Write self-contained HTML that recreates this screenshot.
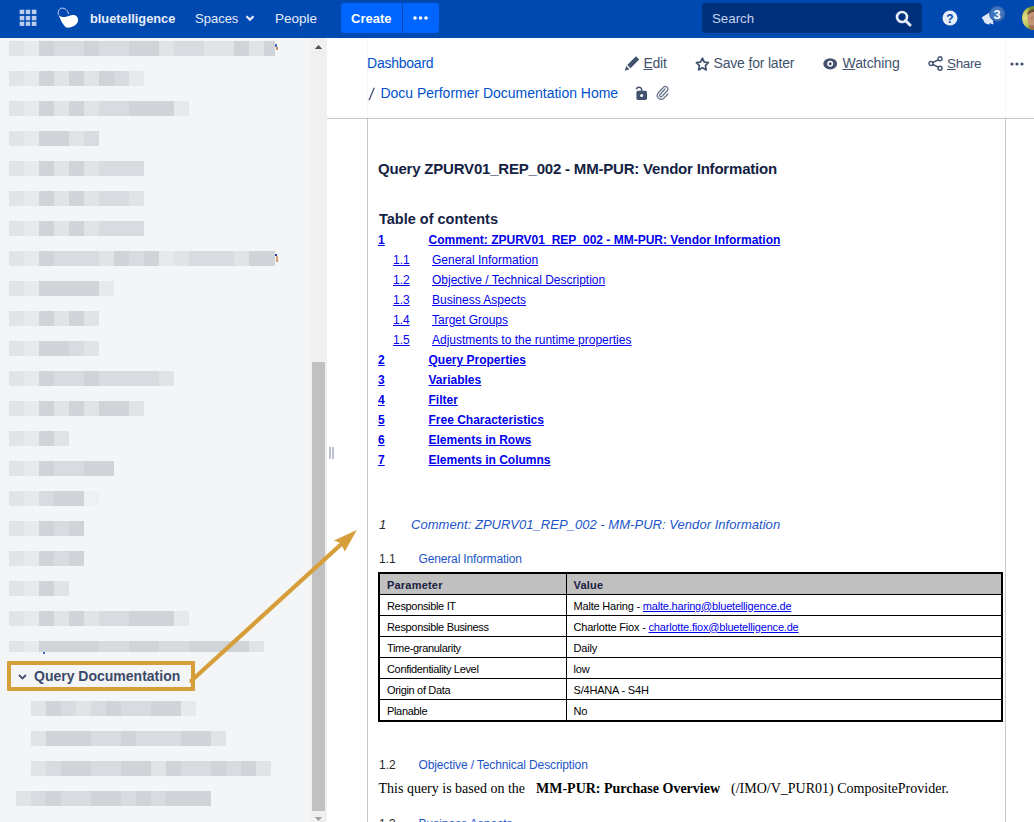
<!DOCTYPE html>
<html><head><meta charset="utf-8">
<style>
*{margin:0;padding:0;box-sizing:border-box}
html,body{width:1034px;height:822px;overflow:hidden;background:#fff;font-family:"Liberation Sans",sans-serif}
.a{position:absolute;white-space:nowrap}
svg{display:block}
#hdr{position:absolute;left:0;top:0;width:1034px;height:38px;background:#0049b0}
#side{position:absolute;left:0;top:38px;width:327px;height:784px;background:#f4f5f7}
.row{position:absolute;height:15px;display:flex}
.row i{display:block;width:15px;height:100%;flex:none}
u{text-decoration:underline}
table.pt{position:absolute;left:378px;top:572px;width:625px;border-collapse:collapse;border:2px solid #000;font-size:11px;letter-spacing:-0.33px;color:#000}
table.pt td{border:1px solid #000;height:21px;padding:5px 0 0 7px;white-space:nowrap;line-height:12px;vertical-align:top}
table.pt td+td{letter-spacing:-0.19px}
table.pt tr.th td{background:#c0c0c0;font-weight:bold;color:#1a2040;letter-spacing:0.2px}
</style></head><body>
<div id="hdr">
  <svg class="a" style="left:19px;top:9px" width="19" height="18" viewBox="0 0 19 18"><g fill="#bccdee">
    <rect x="0.7" y="0.7" width="4.6" height="4.4"/><rect x="6.8" y="0.7" width="4.4" height="4.4"/><rect x="12.8" y="0.7" width="4.6" height="4.4"/>
    <rect x="0.7" y="6.9" width="4.6" height="4.4"/><rect x="6.8" y="6.9" width="4.4" height="4.4"/><rect x="12.8" y="6.9" width="4.6" height="4.4"/>
    <rect x="0.7" y="12.7" width="4.6" height="4.2"/><rect x="6.8" y="12.7" width="4.4" height="4.2"/><rect x="12.8" y="12.7" width="4.6" height="4.2"/>
    </g></svg>
  <svg class="a" style="left:56px;top:6px" width="24" height="24" viewBox="0 0 24 24">
    <path d="M2.6 8.8 C1.6 6.5 2.6 2.3 5.8 2.1 C9 2 12 4.5 12.6 8.2" fill="none" stroke="#fff" stroke-width="0.9" opacity="0.85"/>
    <path d="M2.6 9 C4.5 10.8 6.5 11.2 9 10.9 C11.5 10.6 14 9.2 17 9 C20 8.8 22.2 11 22.1 14.3 C22 18 17 21.8 11.8 21.8 C8 21.5 4.8 14.5 2.6 9 Z" fill="#fff"/>
  </svg>
  <div class="a" style="left:90px;top:11px;font-size:12.8px;font-weight:bold;color:#e6ecf8">bluetelligence</div>
  <div class="a" style="left:195px;top:10.8px;font-size:13px;color:#e6ecf8">Spaces</div>
  <svg class="a" style="left:245px;top:14px" width="10" height="8" viewBox="0 0 10 8"><path d="M1.5 2.2 L5 5.7 L8.5 2.2" stroke="#e6ecf8" stroke-width="2.3" fill="none"/></svg>
  <div class="a" style="left:275px;top:10.8px;font-size:13.5px;color:#e6ecf8">People</div>
  <div class="a" style="left:341px;top:3px;width:98px;height:30px;background:#0065ff;border-radius:3px"></div>
  <div class="a" style="left:402px;top:3px;width:1px;height:30px;background:#0049b0"></div>
  <div class="a" style="left:351px;top:10.6px;font-size:13px;font-weight:bold;color:#fff">Create</div>
  <svg class="a" style="left:413px;top:16px" width="15" height="4"><circle cx="2" cy="2" r="1.8" fill="#fff"/><circle cx="7.5" cy="2" r="1.8" fill="#fff"/><circle cx="13" cy="2" r="1.8" fill="#fff"/></svg>
  <div class="a" style="left:702px;top:3px;width:220px;height:30px;background:#00307c;border-radius:3px"></div>
  <div class="a" style="left:712px;top:10.5px;font-size:13.3px;color:#c5d3ee">Search</div>
  <svg class="a" style="left:895px;top:10px" width="17" height="17" viewBox="0 0 17 17"><circle cx="7" cy="7" r="5" stroke="#e6ecf8" stroke-width="2.6" fill="none"/><path d="M10.5 10.5 L15 15" stroke="#e6ecf8" stroke-width="3" stroke-linecap="round"/></svg>
  <svg class="a" style="left:942px;top:10px" width="16" height="16" viewBox="0 0 16 16"><circle cx="8" cy="8" r="7.5" fill="#e6ecf8"/><text x="8" y="12.5" text-anchor="middle" font-family="Liberation Sans" font-weight="bold" font-size="12" fill="#0049b0">?</text></svg>
  <svg class="a" style="left:980px;top:10px" width="16" height="17" viewBox="0 0 16 17"><path d="M2.2 7.6 L11 2 L13 14 L3.2 9.6 Z" fill="#dfe8f8" stroke="#dfe8f8" stroke-width="1" stroke-linejoin="round"/><path d="M4.3 10.3 L5.4 12.6 L8.8 13.9 L9.4 12 Z" fill="#dfe8f8" stroke="#dfe8f8" stroke-width="1.4" stroke-linejoin="round"/></svg>
  <svg class="a" style="left:989px;top:6px" width="17" height="17" viewBox="0 0 17 17"><circle cx="8.2" cy="7.8" r="7.6" fill="#3d74bb" stroke="#2a5ea5" stroke-width="1"/><text x="8.2" y="13" text-anchor="middle" font-family="Liberation Sans" font-weight="bold" font-size="13" fill="#fff">3</text></svg>
  <svg class="a" style="left:1021px;top:6px" width="13" height="24" viewBox="0 0 13 24"><defs><clipPath id="av"><circle cx="13" cy="12" r="12"/></clipPath><radialGradient id="ag" cx="0.3" cy="0.5" r="0.6"><stop offset="0" stop-color="#e8e088"/><stop offset="0.6" stop-color="#b8c058"/><stop offset="1" stop-color="#6d8a30"/></radialGradient></defs><g clip-path="url(#av)"><rect x="0" y="0" width="13" height="24" fill="url(#ag)"/><ellipse cx="13.5" cy="13" rx="6.8" ry="9" fill="#c59478"/><path d="M6.5 8 C7 4.5 10 3.2 14 3.5 L14 6 C11 5.6 8.5 6.3 7.2 9 Z" fill="#6b4a35"/><ellipse cx="11" cy="12" rx="1" ry="0.6" fill="#7a5a48"/><path d="M9 19 L14 19.5 L14 25 L8 25 Z" fill="#a07050"/></g></svg>
</div>

<div id="side"></div>
<div class="row" style="left:9px;top:41px;height:15px"><i style="background:#e3e4e8"></i><i style="background:#e8e9eb"></i><i style="background:#d0d3d8"></i><i style="background:#d8dbdf"></i><i style="background:#d8dbdf"></i><i style="background:#d0d3d8"></i><i style="background:#d8dbdf"></i><i style="background:#d8dbdf"></i><i style="background:#d0d3d8"></i><i style="background:#d0d3d8"></i><i style="background:#e2e3e7"></i><i style="background:#d8dbdf"></i><i style="background:#d8dbdf"></i><i style="background:#e2e3e7"></i><i style="background:#e2e3e7"></i><i style="background:#d0d3d8"></i><i style="background:#e2e3e7"></i><i style="background:#d0d3d8;width:11px"></i></div>
<div class="row" style="left:9px;top:71px;height:15px"><i style="background:#e3e4e8"></i><i style="background:#e8e9eb"></i><i style="background:#d0d3d8"></i><i style="background:#e2e3e7"></i><i style="background:#d0d3d8"></i><i style="background:#e2e3e7"></i><i style="background:#d0d3d8"></i><i style="background:#d8dbdf"></i><i style="background:#e7e9ec"></i></div>
<div class="row" style="left:9px;top:101px;height:15px"><i style="background:#e3e4e8"></i><i style="background:#e8e9eb"></i><i style="background:#d0d3d8"></i><i style="background:#e2e3e7"></i><i style="background:#d0d3d8"></i><i style="background:#e2e3e7"></i><i style="background:#d8dbdf"></i><i style="background:#d8dbdf"></i><i style="background:#d0d3d8"></i><i style="background:#d0d3d8"></i><i style="background:#d0d3d8"></i><i style="background:#e7e9ec"></i></div>
<div class="row" style="left:9px;top:131px;height:15px"><i style="background:#e3e4e8"></i><i style="background:#e8e9eb"></i><i style="background:#d0d3d8"></i><i style="background:#d0d3d8"></i><i style="background:#e2e3e7"></i><i style="background:#d8dbdf"></i></div>
<div class="row" style="left:9px;top:161px;height:15px"><i style="background:#e3e4e8"></i><i style="background:#e8e9eb"></i><i style="background:#d0d3d8"></i><i style="background:#e2e3e7"></i><i style="background:#d0d3d8"></i><i style="background:#e2e3e7"></i><i style="background:#d8dbdf"></i><i style="background:#d8dbdf"></i><i style="background:#d8dbdf"></i></div>
<div class="row" style="left:9px;top:191px;height:15px"><i style="background:#e3e4e8"></i><i style="background:#e8e9eb"></i><i style="background:#d0d3d8"></i><i style="background:#e2e3e7"></i><i style="background:#d0d3d8"></i><i style="background:#e2e3e7"></i><i style="background:#d8dbdf"></i><i style="background:#d8dbdf"></i><i style="background:#e2e3e7"></i></div>
<div class="row" style="left:9px;top:221px;height:15px"><i style="background:#e3e4e8"></i><i style="background:#e8e9eb"></i><i style="background:#d0d3d8"></i><i style="background:#e2e3e7"></i><i style="background:#d0d3d8"></i><i style="background:#e2e3e7"></i><i style="background:#d8dbdf"></i><i style="background:#d8dbdf"></i><i style="background:#d8dbdf"></i></div>
<div class="row" style="left:9px;top:251px;height:15px"><i style="background:#e3e4e8"></i><i style="background:#e8e9eb"></i><i style="background:#d0d3d8"></i><i style="background:#d8dbdf"></i><i style="background:#d8dbdf"></i><i style="background:#d8dbdf"></i><i style="background:#e2e3e7"></i><i style="background:#d0d3d8"></i><i style="background:#d8dbdf"></i><i style="background:#d0d3d8"></i><i style="background:#e7e9ec"></i><i style="background:#e2e3e7"></i><i style="background:#d8dbdf"></i><i style="background:#d8dbdf"></i><i style="background:#d8dbdf"></i><i style="background:#e2e3e7"></i><i style="background:#d0d3d8"></i><i style="background:#d0d3d8;width:11px"></i></div>
<div class="row" style="left:9px;top:281px;height:15px"><i style="background:#e3e4e8"></i><i style="background:#e8e9eb"></i><i style="background:#d0d3d8"></i><i style="background:#d0d3d8"></i><i style="background:#d0d3d8"></i><i style="background:#d0d3d8"></i><i style="background:#e7e9ec"></i></div>
<div class="row" style="left:9px;top:311px;height:15px"><i style="background:#e3e4e8"></i><i style="background:#e8e9eb"></i><i style="background:#d0d3d8"></i><i style="background:#e2e3e7"></i><i style="background:#d0d3d8"></i><i style="background:#e2e3e7"></i></div>
<div class="row" style="left:9px;top:341px;height:15px"><i style="background:#e3e4e8"></i><i style="background:#e8e9eb"></i><i style="background:#d0d3d8"></i><i style="background:#d0d3d8"></i><i style="background:#d8dbdf"></i><i style="background:#e2e3e7"></i></div>
<div class="row" style="left:9px;top:371px;height:15px"><i style="background:#e3e4e8"></i><i style="background:#e8e9eb"></i><i style="background:#d0d3d8"></i><i style="background:#d8dbdf"></i><i style="background:#d8dbdf"></i><i style="background:#d0d3d8"></i><i style="background:#d8dbdf"></i><i style="background:#d8dbdf"></i><i style="background:#d8dbdf"></i><i style="background:#d8dbdf"></i><i style="background:#e2e3e7"></i></div>
<div class="row" style="left:9px;top:401px;height:15px"><i style="background:#e3e4e8"></i><i style="background:#e8e9eb"></i><i style="background:#d0d3d8"></i><i style="background:#e2e3e7"></i><i style="background:#d0d3d8"></i><i style="background:#e2e3e7"></i><i style="background:#d0d3d8"></i><i style="background:#d0d3d8"></i><i style="background:#e2e3e7"></i></div>
<div class="row" style="left:9px;top:431px;height:15px"><i style="background:#e3e4e8"></i><i style="background:#e8e9eb"></i><i style="background:#d0d3d8"></i><i style="background:#e2e3e7"></i></div>
<div class="row" style="left:9px;top:461px;height:15px"><i style="background:#e3e4e8"></i><i style="background:#e8e9eb"></i><i style="background:#d0d3d8"></i><i style="background:#d8dbdf"></i><i style="background:#d8dbdf"></i><i style="background:#d0d3d8"></i><i style="background:#d0d3d8"></i></div>
<div class="row" style="left:9px;top:491px;height:15px"><i style="background:#e3e4e8"></i><i style="background:#e8e9eb"></i><i style="background:#d8dbdf"></i><i style="background:#d0d3d8"></i><i style="background:#d0d3d8"></i><i style="background:#eef0f2"></i></div>
<div class="row" style="left:9px;top:521px;height:15px"><i style="background:#e3e4e8"></i><i style="background:#e8e9eb"></i><i style="background:#d0d3d8"></i><i style="background:#d8dbdf"></i><i style="background:#d0d3d8"></i></div>
<div class="row" style="left:9px;top:551px;height:15px"><i style="background:#e3e4e8"></i><i style="background:#e8e9eb"></i><i style="background:#d0d3d8"></i><i style="background:#d8dbdf"></i><i style="background:#d0d3d8"></i></div>
<div class="row" style="left:9px;top:581px;height:15px"><i style="background:#e3e4e8"></i><i style="background:#e8e9eb"></i><i style="background:#d0d3d8"></i><i style="background:#e2e3e7"></i></div>
<div class="row" style="left:9px;top:611px;height:15px"><i style="background:#e3e4e8"></i><i style="background:#e8e9eb"></i><i style="background:#d0d3d8"></i><i style="background:#e2e3e7"></i><i style="background:#d0d3d8"></i><i style="background:#e2e3e7"></i><i style="background:#d8dbdf"></i><i style="background:#d8dbdf"></i><i style="background:#d0d3d8"></i><i style="background:#d0d3d8"></i><i style="background:#d0d3d8"></i><i style="background:#e7e9ec"></i></div>
<div class="row" style="left:9px;top:641px;height:11px"><i style="background:#e3e4e8"></i><i style="background:#e8e9eb"></i><i style="background:#d0d3d8"></i><i style="background:#d0d3d8"></i><i style="background:#d0d3d8"></i><i style="background:#d0d3d8"></i><i style="background:#d8dbdf"></i><i style="background:#d8dbdf"></i><i style="background:#d0d3d8"></i><i style="background:#d0d3d8"></i><i style="background:#d8dbdf"></i><i style="background:#d8dbdf"></i><i style="background:#d0d3d8"></i><i style="background:#d0d3d8"></i><i style="background:#d0d3d8"></i><i style="background:#d0d3d8"></i><i style="background:#e2e3e7"></i></div>
<div class="row" style="left:31px;top:701px;height:15px"><i style="background:#e2e3e7"></i><i style="background:#d0d3d8"></i><i style="background:#d8dbdf"></i><i style="background:#e2e3e7"></i><i style="background:#d8dbdf"></i><i style="background:#d0d3d8"></i><i style="background:#d8dbdf"></i><i style="background:#d8dbdf"></i><i style="background:#d0d3d8"></i><i style="background:#d0d3d8"></i><i style="background:#e7e9ec"></i></div>
<div class="row" style="left:31px;top:731px;height:15px"><i style="background:#e2e3e7"></i><i style="background:#d0d3d8"></i><i style="background:#d0d3d8"></i><i style="background:#d0d3d8"></i><i style="background:#d8dbdf"></i><i style="background:#d8dbdf"></i><i style="background:#d0d3d8"></i><i style="background:#d8dbdf"></i><i style="background:#d8dbdf"></i><i style="background:#d8dbdf"></i><i style="background:#d0d3d8"></i><i style="background:#d0d3d8"></i><i style="background:#e2e3e7"></i></div>
<div class="row" style="left:31px;top:761px;height:15px"><i style="background:#e2e3e7"></i><i style="background:#d8dbdf"></i><i style="background:#d0d3d8"></i><i style="background:#d0d3d8"></i><i style="background:#d8dbdf"></i><i style="background:#d8dbdf"></i><i style="background:#d0d3d8"></i><i style="background:#d0d3d8"></i><i style="background:#e2e3e7"></i><i style="background:#d0d3d8"></i><i style="background:#d8dbdf"></i><i style="background:#d8dbdf"></i><i style="background:#d0d3d8"></i><i style="background:#d8dbdf"></i><i style="background:#d0d3d8"></i><i style="background:#e2e3e7"></i></div>
<div class="row" style="left:16px;top:791px;height:15px"><i style="background:#e2e3e7"></i><i style="background:#d8dbdf"></i><i style="background:#d0d3d8"></i><i style="background:#d8dbdf"></i><i style="background:#d8dbdf"></i><i style="background:#d0d3d8"></i><i style="background:#d0d3d8"></i><i style="background:#d8dbdf"></i><i style="background:#d0d3d8"></i><i style="background:#d8dbdf"></i><i style="background:#d0d3d8"></i><i style="background:#d0d3d8"></i><i style="background:#d0d3d8"></i></div>
<div class="a" style="left:275px;top:44px;width:2px;height:3px;background:#4a6fc0"></div>
<div class="a" style="left:276px;top:47px;width:1.5px;height:3px;background:#c89060"></div>
<div class="a" style="left:275px;top:254px;width:2px;height:2px;background:#2a3a90"></div>
<div class="a" style="left:276px;top:256px;width:1.5px;height:6px;background:#d8a070"></div>
<div class="a" style="left:43px;top:652px;width:1.5px;height:2px;background:#3a70c0"></div>
<!-- Query Documentation highlight -->
<svg class="a" style="left:18px;top:674px" width="9" height="6" viewBox="0 0 9 6"><path d="M1 1 L4.5 4.5 L8 1" stroke="#42526e" stroke-width="1.8" fill="none"/></svg>
<div class="a" style="left:34px;top:669px;font-size:14px;line-height:14px;font-weight:bold;color:#3a4a68">Query Documentation</div>
<div class="a" style="left:7px;top:661px;width:188px;height:30px;border:4px solid #d69e3a"></div>

<!-- scrollbar -->
<div class="a" style="left:310px;top:38px;width:17px;height:784px;background:#f0f0f0"></div>
<div class="a" style="left:312px;top:362px;width:13px;height:449px;background:#c1c1c1"></div>
<svg class="a" style="left:314px;top:44px" width="9" height="6"><path d="M0.8 5 L4.5 1 L8.2 5 Z" fill="#505050"/></svg>
<svg class="a" style="left:314px;top:816px" width="9" height="6"><path d="M0.8 1 L4.5 5 L8.2 1 Z" fill="#a0a0a0"/></svg>
<!-- splitter -->
<div class="a" style="left:329px;top:447px;width:2px;height:12px;background:#bcc3ce"></div>
<div class="a" style="left:332px;top:447px;width:2px;height:12px;background:#bcc3ce"></div>

<!-- page chrome lines -->
<div class="a" style="left:327px;top:118px;width:707px;height:1px;background:#c8c8c8"></div>
<div class="a" style="left:367px;top:38px;width:1px;height:80px;background:#f8f8f8"></div>
<div class="a" style="left:1005px;top:38px;width:1px;height:80px;background:#f8f8f8"></div>
<div class="a" style="left:367px;top:118px;width:1px;height:704px;background:#c8c8c8"></div>
<div class="a" style="left:1005px;top:118px;width:1px;height:704px;background:#c8c8c8"></div>

<div class="a" style="left:367px;top:55.95px;font-size:14px;line-height:14px;color:#0052cc;letter-spacing:-0.23px">Dashboard</div>
<svg class="a" style="left:367px;top:86px" width="9" height="16"><path d="M7.3 1.8 L2 14.2" stroke="#42526e" stroke-width="1.3"/></svg>
<div class="a" style="left:380.5px;top:85.95px;font-size:14px;line-height:14px;color:#0052cc;letter-spacing:-0.015px">Docu Performer Documentation Home</div>
<div class="a" style="left:643.5px;top:56.15px;font-size:14px;line-height:14px;color:#42526e;letter-spacing:-0.28px"><u>E</u>dit</div>
<div class="a" style="left:713.5px;top:56.15px;font-size:14px;line-height:14px;color:#42526e;letter-spacing:-0.18px">Save <u>f</u>or later</div>
<div class="a" style="left:842.5px;top:56.15px;font-size:14px;line-height:14px;color:#42526e;letter-spacing:-0.08px"><u>W</u>atching</div>
<div class="a" style="left:947px;top:56.57px;font-size:13.5px;line-height:13.5px;color:#42526e;letter-spacing:-0.35px"><u>S</u>hare</div>
<!-- toolbar icons -->
<svg class="a" style="left:624px;top:56px" width="16" height="16" viewBox="0 0 16 16"><path d="M4.9 10.6 L13.6 1.9" stroke="#42526e" stroke-width="4.6" stroke-linecap="butt"/><path d="M0.8 14.7 L2.2 9.9 L5.5 13.3 Z" fill="#42526e"/></svg>
<svg class="a" style="left:695px;top:57px" width="15" height="15" viewBox="0 0 15 15"><path d="M7.4 1.2 L9.3 5.2 L13.4 5.7 L10.4 8.6 L11.2 12.9 L7.4 10.8 L3.6 12.9 L4.4 8.6 L1.4 5.7 L5.5 5.2 Z" fill="none" stroke="#42526e" stroke-width="1.7" stroke-linejoin="round"/></svg>
<svg class="a" style="left:823px;top:57px" width="15" height="14" viewBox="0 0 15 14"><ellipse cx="7.2" cy="6.8" rx="6.9" ry="5.6" fill="#42526e"/><circle cx="7.2" cy="6.8" r="3" fill="#fff"/><circle cx="7.2" cy="6.8" r="1.5" fill="#42526e"/></svg>
<svg class="a" style="left:928px;top:56px" width="15" height="15" viewBox="0 0 15 15"><circle cx="12" cy="2.8" r="2" fill="none" stroke="#42526e" stroke-width="1.4"/><circle cx="3" cy="7.5" r="2" fill="none" stroke="#42526e" stroke-width="1.4"/><circle cx="12" cy="12.2" r="2" fill="none" stroke="#42526e" stroke-width="1.4"/><path d="M4.8 6.5 L10.2 3.8 M4.8 8.5 L10.2 11.2" stroke="#42526e" stroke-width="1.4"/></svg>
<svg class="a" style="left:1010px;top:62px" width="14" height="4"><circle cx="2" cy="2" r="1.6" fill="#42526e"/><circle cx="7" cy="2" r="1.6" fill="#42526e"/><circle cx="12" cy="2" r="1.6" fill="#42526e"/></svg>
<svg class="a" style="left:634px;top:85px" width="14" height="16" viewBox="0 0 14 16"><path d="M2.2 4.3 A2.9 2.9 0 0 1 7.6 3.8 V6.5" fill="none" stroke="#42526e" stroke-width="1.5"/><rect x="2.4" y="5.8" width="10.6" height="9.1" rx="1.6" fill="#42526e"/><circle cx="7.7" cy="10.4" r="1.5" fill="#fff"/></svg>
<svg class="a" style="left:656px;top:85px" width="14" height="15" viewBox="0 0 14 15"><path d="M9 4 L4 9.5 A1.3 1.3 0 0 0 6 11.3 L11.5 5.5 A2.6 2.6 0 0 0 7.8 2 L2.3 7.8 A3.9 3.9 0 0 0 7.8 13.3 L12 9" fill="none" stroke="#6b778c" stroke-width="1.3" stroke-linecap="round"/></svg>

<div class="a" style="left:378px;top:161.30px;font-size:15px;line-height:15px;font-weight:bold;color:#142244;letter-spacing:-0.2px">Query ZPURV01_REP_002 - MM-PUR: Vendor Information</div>
<div class="a" style="left:379px;top:211.73px;font-size:14.5px;line-height:14.5px;font-weight:bold;color:#142244">Table of contents</div>
<div class="a" style="left:378px;top:233.84px;font-size:12px;line-height:12px;font-weight:bold;color:#0000ee;text-decoration:underline">1</div>
<div class="a" style="left:428.5px;top:233.84px;font-size:12px;line-height:12px;font-weight:bold;color:#0000ee;text-decoration:underline">Comment: ZPURV01_REP_002 - MM-PUR: Vendor Information</div>
<div class="a" style="left:393px;top:253.84px;font-size:12px;line-height:12px;color:#0000ee;text-decoration:underline">1.1</div>
<div class="a" style="left:432px;top:253.84px;font-size:12px;line-height:12px;color:#0000ee;text-decoration:underline">General Information</div>
<div class="a" style="left:393px;top:273.84px;font-size:12px;line-height:12px;color:#0000ee;text-decoration:underline">1.2</div>
<div class="a" style="left:432px;top:273.84px;font-size:12px;line-height:12px;color:#0000ee;text-decoration:underline">Objective / Technical Description</div>
<div class="a" style="left:393px;top:293.84px;font-size:12px;line-height:12px;color:#0000ee;text-decoration:underline">1.3</div>
<div class="a" style="left:432px;top:293.84px;font-size:12px;line-height:12px;color:#0000ee;text-decoration:underline">Business Aspects</div>
<div class="a" style="left:393px;top:313.84px;font-size:12px;line-height:12px;color:#0000ee;text-decoration:underline">1.4</div>
<div class="a" style="left:432px;top:313.84px;font-size:12px;line-height:12px;color:#0000ee;text-decoration:underline">Target Groups</div>
<div class="a" style="left:393px;top:333.84px;font-size:12px;line-height:12px;color:#0000ee;text-decoration:underline">1.5</div>
<div class="a" style="left:432px;top:333.84px;font-size:12px;line-height:12px;color:#0000ee;text-decoration:underline">Adjustments to the runtime properties</div>
<div class="a" style="left:378px;top:353.84px;font-size:12px;line-height:12px;font-weight:bold;color:#0000ee;text-decoration:underline">2</div>
<div class="a" style="left:428.5px;top:353.84px;font-size:12px;line-height:12px;font-weight:bold;color:#0000ee;text-decoration:underline">Query Properties</div>
<div class="a" style="left:378px;top:373.84px;font-size:12px;line-height:12px;font-weight:bold;color:#0000ee;text-decoration:underline">3</div>
<div class="a" style="left:428.5px;top:373.84px;font-size:12px;line-height:12px;font-weight:bold;color:#0000ee;text-decoration:underline">Variables</div>
<div class="a" style="left:378px;top:393.84px;font-size:12px;line-height:12px;font-weight:bold;color:#0000ee;text-decoration:underline">4</div>
<div class="a" style="left:428.5px;top:393.84px;font-size:12px;line-height:12px;font-weight:bold;color:#0000ee;text-decoration:underline">Filter</div>
<div class="a" style="left:378px;top:413.84px;font-size:12px;line-height:12px;font-weight:bold;color:#0000ee;text-decoration:underline">5</div>
<div class="a" style="left:428.5px;top:413.84px;font-size:12px;line-height:12px;font-weight:bold;color:#0000ee;text-decoration:underline">Free Characteristics</div>
<div class="a" style="left:378px;top:433.84px;font-size:12px;line-height:12px;font-weight:bold;color:#0000ee;text-decoration:underline">6</div>
<div class="a" style="left:428.5px;top:433.84px;font-size:12px;line-height:12px;font-weight:bold;color:#0000ee;text-decoration:underline">Elements in Rows</div>
<div class="a" style="left:378px;top:453.84px;font-size:12px;line-height:12px;font-weight:bold;color:#0000ee;text-decoration:underline">7</div>
<div class="a" style="left:428.5px;top:453.84px;font-size:12px;line-height:12px;font-weight:bold;color:#0000ee;text-decoration:underline">Elements in Columns</div>
<div class="a" style="left:379px;top:518.00px;font-size:13px;line-height:13px;font-style:italic;color:#2a2a2a">1</div>
<div class="a" style="left:411px;top:518.00px;font-size:13px;line-height:13px;font-style:italic;color:#1c55c8;letter-spacing:0.04px">Comment: ZPURV01_REP_002 - MM-PUR: Vendor Information</div>
<div class="a" style="left:379px;top:552.84px;font-size:12px;line-height:12px;color:#2a2a2a">1.1</div>
<div class="a" style="left:418.5px;top:552.84px;font-size:12px;line-height:12px;color:#1c55c8;letter-spacing:-0.15px">General Information</div>
<div class="a" style="left:379px;top:758.84px;font-size:12px;line-height:12px;color:#2a2a2a">1.2</div>
<div class="a" style="left:418.5px;top:758.84px;font-size:12px;line-height:12px;color:#1c55c8;letter-spacing:-0.12px">Objective / Technical Description</div>
<div class="a" style="left:379px;top:817.84px;font-size:12px;line-height:12px;color:#2a2a2a">1.3</div>
<div class="a" style="left:418.5px;top:817.84px;font-size:12px;line-height:12px;color:#1c55c8">Business Aspects</div>
<div class="a" style="left:378.5px;top:782.07px;font-size:14px;line-height:14px;font-family:'Liberation Serif',serif;color:#000">This query is based on the</div>
<div class="a" style="left:536px;top:782.07px;font-size:14px;line-height:14px;font-family:'Liberation Serif',serif;color:#000;font-weight:bold">MM-PUR: Purchase Overview</div>
<div class="a" style="left:731px;top:782.07px;font-size:14px;line-height:14px;font-family:'Liberation Serif',serif;color:#000">(/IMO/V_PUR01) CompositeProvider.</div>
<table class="pt"><tr class="th"><td style="width:187px">Parameter</td><td>Value</td></tr><tr><td>Responsible IT</td><td>Malte Haring - <u style="color:#0000ee">malte.haring@bluetelligence.de</u></td></tr><tr><td>Responsible Business</td><td>Charlotte Fiox - <u style="color:#0000ee">charlotte.fiox@bluetelligence.de</u></td></tr><tr><td>Time-granularity</td><td>Daily</td></tr><tr><td>Confidentiality Level</td><td>low</td></tr><tr><td>Origin of Data</td><td>S/4HANA - S4H</td></tr><tr style="height:22px"><td>Planable</td><td>No</td></tr></table>

<!-- arrow -->
<svg class="a" style="left:0;top:0" width="1034" height="822">
  <path d="M190.5 681.5 L342 543.5" stroke="#d69e3a" stroke-width="4.2" stroke-linecap="butt"/>
  <path d="M189 682 L192 679.5 L192 684 Z" fill="#d69e3a"/>
  <path d="M356.8 530 L334 540.5 L340.5 543 L344.8 551.5 Z" fill="#d69e3a"/>
</svg>
</body></html>
